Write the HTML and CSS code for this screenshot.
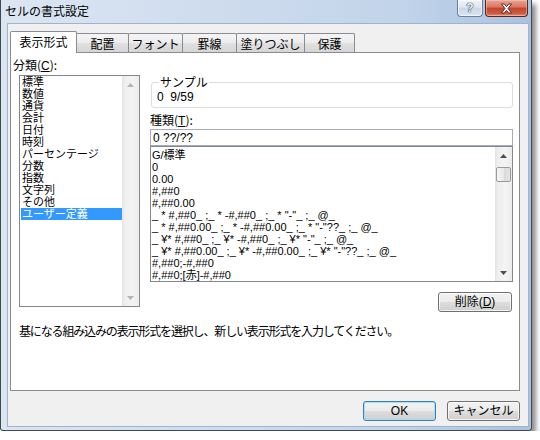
FILE: index.html
```html
<!DOCTYPE html>
<html lang="ja">
<head>
<meta charset="utf-8">
<title>セルの書式設定</title>
<link rel="stylesheet" href="styles.css">
</head>
<body>
<div class="window">
  <div class="titlebar">
    <span class="title">セルの書式設定</span>
    <div class="caption">
      <div class="cap-btn help"><span>?</span></div>
      <div class="cap-btn close">
        <svg width="15" height="11" viewBox="0 0 15 11"><path d="M2.5 1 H5.3 L7.5 3.6 L9.7 1 H12.5 L9 5.5 L12.5 10 H9.7 L7.5 7.4 L5.3 10 H2.5 L6 5.5 Z" fill="#fff" stroke="#4a1f1a" stroke-width="0.9" stroke-linejoin="round"/></svg>
      </div>
    </div>
  </div>
  <div class="client">
    <div class="tabs">
      <div class="tab sel">表示形式</div>
      <div class="tab t2">配置</div>
      <div class="tab t3">フォント</div>
      <div class="tab t4">罫線</div>
      <div class="tab t5">塗りつぶし</div>
      <div class="tab t6">保護</div>
    </div>
    <div class="panel">
      <div class="col-left">
        <div class="label">分類(<u>C</u>):</div>
        <div class="listbox">
          <div class="items">
            <div class="item">標準</div>
            <div class="item">数値</div>
            <div class="item">通貨</div>
            <div class="item">会計</div>
            <div class="item">日付</div>
            <div class="item">時刻</div>
            <div class="item">パーセンテージ</div>
            <div class="item">分数</div>
            <div class="item">指数</div>
            <div class="item">文字列</div>
            <div class="item">その他</div>
            <div class="item selected">ユーザー定義</div>
          </div>
          <div class="vscroll disabled">
            <div class="arrow"><svg width="7" height="4" viewBox="0 0 7 4"><path d="M0 4 L3.5 0 L7 4 Z"/></svg></div>
            <div class="track"></div>
            <div class="arrow"><svg width="7" height="4" viewBox="0 0 7 4"><path d="M0 0 L3.5 4 L7 0 Z"/></svg></div>
          </div>
        </div>
      </div>
      <div class="col-right">
        <fieldset class="sample">
          <legend>サンプル</legend>
          <div class="sample-val">0  9/59</div>
        </fieldset>
        <div class="label kind">種類(<u>T</u>):</div>
        <div class="input">0 ??/??</div>
        <div class="fmtlist">
          <div class="fmt-items">
            <div>G/標準</div>
            <div>0</div>
            <div>0.00</div>
            <div>#,##0</div>
            <div>#,##0.00</div>
            <div>_ * #,##0_ ;_ * -#,##0_ ;_ * "-"_ ;_ @_</div>
            <div>_ * #,##0.00_ ;_ * -#,##0.00_ ;_ * "-"??_ ;_ @_</div>
            <div>_ ¥* #,##0_ ;_ ¥* -#,##0_ ;_ ¥* "-"_ ;_ @_</div>
            <div>_ ¥* #,##0.00_ ;_ ¥* -#,##0.00_ ;_ ¥* "-"??_ ;_ @_</div>
            <div>#,##0;-#,##0</div>
            <div>#,##0;[赤]-#,##0</div>
          </div>
          <div class="vscroll">
            <div class="arrow"><svg width="7" height="4" viewBox="0 0 7 4"><path d="M0 4 L3.5 0 L7 4 Z"/></svg></div>
            <div class="thumb"></div>
            <div class="track"></div>
            <div class="arrow"><svg width="7" height="4" viewBox="0 0 7 4"><path d="M0 0 L3.5 4 L7 0 Z"/></svg></div>
          </div>
        </div>
        <div class="btn-row"><button class="btn del">削除(<u>D</u>)</button></div>
      </div>
      <div class="desc">基になる組み込みの表示形式を選択し、新しい表示形式を入力してください。</div>
    </div>
    <div class="footer">
      <button class="btn default">OK</button>
      <button class="btn">キャンセル</button>
    </div>
  </div>
</div>
</body>
</html>
```
FILE: styles.css
```css
html, body {
  margin: 0;
  background: #ffffff;
}
body {
  font-family: "Liberation Sans", "Noto Sans CJK JP", sans-serif;
  font-size: 12px;
  line-height: 12px;
  color: #000;
}

.window {
  width: 532px;
  height: 431px;
  box-sizing: border-box;
  border: 1px solid #3f4954;
  border-top: 0;
  border-radius: 0 0 3px 3px;
  background: linear-gradient(to right, #dbe6f2 0%, #cfdcee 40%, #c2d4ea 75%, #a9c2e0 100%);
  box-shadow: 4px 4px 5px rgba(0, 0, 0, 0.45);
  display: flex;
  flex-direction: column;
}

.titlebar {
  height: 24px;
  flex: none;
  display: flex;
  justify-content: space-between;
  align-items: flex-start;
}
.title {
  font-family: "Noto Sans CJK JP", sans-serif;
  font-size: 12px;
  line-height: 22px;
  padding-left: 4px;
}
.caption {
  display: flex;
  gap: 2px;
  margin-right: 3px;
}
.cap-btn {
  height: 17px;
  box-sizing: border-box;
  border: 1px solid;
  border-top: 0;
  border-radius: 0 0 4px 4px;
  display: flex;
  align-items: center;
  justify-content: center;
}
.help {
  width: 26px;
  border-color: #6f7f96;
  background: linear-gradient(#eef3f9 0%, #dfe7f1 45%, #c9d7e8 50%, #d9e5f2 100%);
  box-shadow: inset 0 0 0 1px rgba(255, 255, 255, 0.6);
}
.help span {
  font-family: "Liberation Sans", sans-serif;
  font-weight: bold;
  font-size: 12px;
  line-height: 12px;
  color: #eef2f8;
  text-shadow: 0 0 1px #33415a, 0 0 1px #33415a, 0 0 1px #33415a;
}
.close {
  width: 43px;
  border-color: #5a2621;
  background: linear-gradient(#e8a596 0%, #d8765f 45%, #c3432b 50%, #cf5b40 85%, #e49a80 100%);
  box-shadow: inset 0 0 0 1px rgba(255, 210, 200, 0.45);
}

.client {
  flex: 1;
  margin: 0 3px 4px 7px;
  background: #f0f0f0;
  box-shadow: 0 0 0 1px #9fb3cc;
  display: flex;
  flex-direction: column;
}

/* tabs */
.tabs {
  display: flex;
  align-items: flex-start;
  margin: 7px 0 0 2px;
  height: 21px;
}
.tab {
  box-sizing: border-box;
  height: 19px;
  margin-top: 2px;
  margin-left: -1px;
  border: 1px solid #898c95;
  border-bottom: 0;
  border-radius: 2px 2px 0 0;
  background: linear-gradient(#f5f5f5 0%, #ececec 50%, #e0e0e0 51%, #d6d6d6 100%);
  font-family: "Noto Sans CJK JP", sans-serif;
  display: flex;
  align-items: center;
  justify-content: center;
  padding-top: 1px;
}
.tab.sel {
  width: 67px;
  height: 22px;
  margin: 0 0 -1px 0;
  background: #fff;
  position: relative;
  z-index: 2;
  padding-top: 0;
  padding-bottom: 2px;
}
.t2 { width: 53px; }
.t3 { width: 55px; }
.t4 { width: 55px; }
.t5 { width: 69px; }
.t6 { width: 51px; }

/* panel */
.panel {
  margin-left: 2px;
  width: 510px;
  height: 339px;
  box-sizing: border-box;
  border: 1px solid #898c95;
  background: #fff;
  padding: 6px 0 0 2px;
  display: grid;
  grid-template-columns: 137px 363px;
  grid-template-rows: auto auto;
  align-content: start;
  align-items: start;
}
.label {
  font-family: "Noto Sans CJK JP", sans-serif;
  height: 12px;
  white-space: nowrap;
}
.label u {
  font-family: "Liberation Sans", sans-serif;
}

.listbox {
  margin: 4px 0 0 6px;
  width: 121px;
  height: 232px;
  box-sizing: border-box;
  border: 1px solid #828790;
  display: flex;
}
.items {
  flex: 1;
  padding-left: 1px;
  font-family: "Liberation Sans", "Noto Sans CJK JP", sans-serif;
  font-size: 11px;
}
.item {
  height: 12px;
  line-height: 12px;
  padding-left: 1px;
  white-space: nowrap;
}
.item.selected {
  background: #3399ff;
  color: #fff;
}

.vscroll {
  width: 17px;
  display: flex;
  flex-direction: column;
  background: linear-gradient(to right, #e3e3e3 0px, #efefef 3px, #f4f4f4 60%, #ececec 100%);
}
.arrow {
  height: 17px;
  display: flex;
  align-items: center;
  justify-content: center;
  fill: #4d4d4d;
}
.vscroll.disabled .arrow {
  fill: #b4b4b4;
}
.track {
  flex: 1;
}
.thumb {
  height: 15px;
  margin: 3px 1px 0 1px;
  box-sizing: border-box;
  border: 1px solid #9a9a9a;
  border-radius: 2px;
  background: linear-gradient(to right, #f6f6f6 0%, #e9e9e9 50%, #d9d9d9 51%, #e4e4e4 100%);
}

.col-right {
  display: flex;
  flex-direction: column;
  align-items: flex-start;
}
.sample {
  margin: 17px 0 0 1px;
  width: 362px;
  box-sizing: border-box;
  padding: 3px 4px 4px 5px;
  border: 1px solid #d5dfe5;
  border-radius: 3px;
  min-width: 0;
}
.sample legend {
  padding: 0 1px;
  margin-left: 2px;
  font-family: "Noto Sans CJK JP", sans-serif;
  line-height: 12px;
  height: 12px;
}
.sample-val {
  white-space: pre;
  height: 12px;
}
.kind {
  margin-top: 6px;
}
.input {
  margin-top: 3px;
  width: 363px;
  height: 17px;
  box-sizing: border-box;
  border: 1px solid #a5acb5;
  padding: 2px 0 0 2px;
  white-space: pre;
}
.fmtlist {
  width: 363px;
  height: 136px;
  box-sizing: border-box;
  border: 1px solid #828790;
  display: flex;
}
.fmt-items {
  flex: 1;
  padding: 2px 0 0 1px;
  overflow: hidden;
}
.fmt-items div {
  height: 12px;
  white-space: pre;
  font-size: 11px;
}
.btn-row {
  align-self: stretch;
  display: flex;
  justify-content: flex-end;
  margin-top: 10px;
  padding-right: 1px;
}

.btn {
  height: 20px;
  box-sizing: border-box;
  border: 1px solid #707070;
  border-radius: 3px;
  background: linear-gradient(#f2f2f2 0%, #ebebeb 50%, #dddddd 51%, #cfcfcf 100%);
  box-shadow: inset 0 0 0 1px rgba(255, 255, 255, 0.75);
  font-family: "Liberation Sans", "Noto Sans CJK JP", sans-serif;
  font-size: 12px;
  line-height: 16px;
  color: #000;
  padding: 0;
  width: 73px;
}
.btn.del {
  width: 74px;
}
.btn.default {
  border-color: #3c7fb1;
  box-shadow: inset 0 0 0 1px #9fe0fb;
}

.desc {
  grid-column: 1 / span 2;
  margin-top: 13px;
  padding-left: 6px;
  font-family: "Noto Sans CJK JP", sans-serif;
  letter-spacing: -1.15px;
  white-space: nowrap;
}

.footer {
  margin-top: 10px;
  display: flex;
  justify-content: flex-end;
  gap: 11px;
  padding-right: 8px;
}
```
